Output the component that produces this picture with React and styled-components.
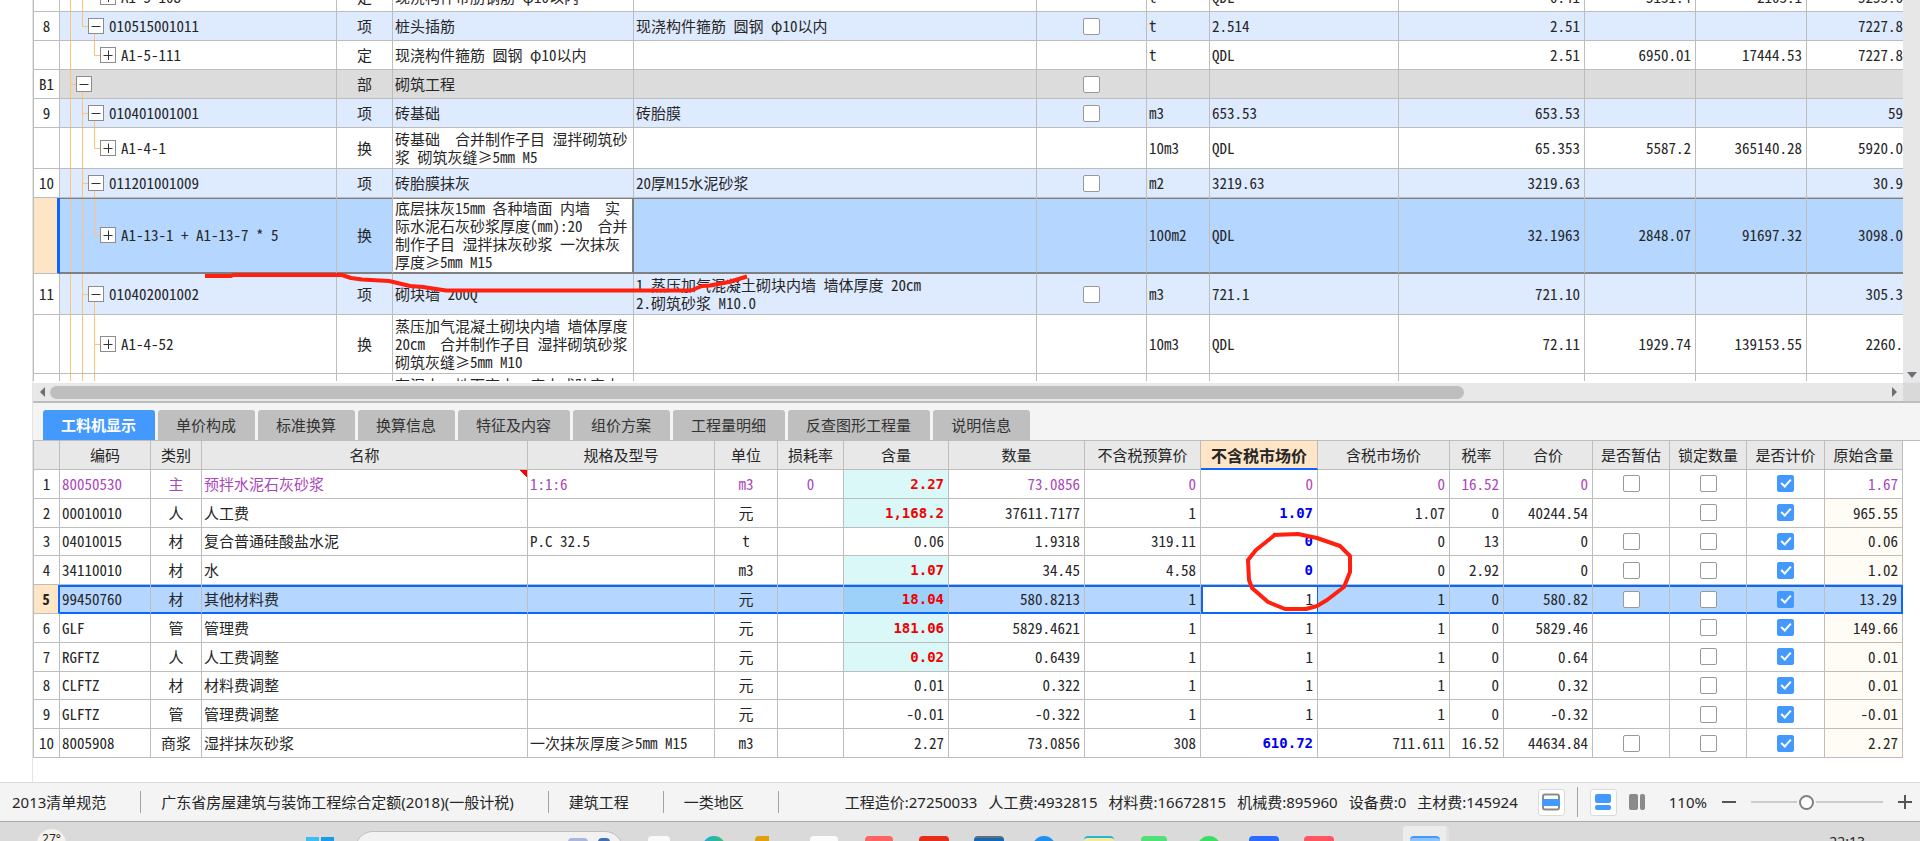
import React from "react";
import styled, { createGlobalStyle, css } from "styled-components";

const GlobalStyle = createGlobalStyle`
  *, *::before, *::after { box-sizing: border-box; }
  body {
    margin: 0;
    background: #fff;
    color: #262626;
    font: 15px/18px "Noto Sans", "Noto Sans CJK SC", sans-serif;
  }
  button { font: inherit; color: inherit; padding: 0; border: 0; background: none; }
`;

const LINE = "#bdbdbd";
const BLUE = "#4499ff";
const FOCUS = "#0a66ff";
const GUIDE = "#ffc27a";

/* ---------- page frame ---------- */

const Page = styled.div`
  position: relative;
  display: flex;
  flex-direction: column;
  height: 100vh;
  min-height: 720px;
  overflow: hidden;
`;

const Workspace = styled.main`
  flex: 1;
  min-height: 0;
  display: flex;
  flex-direction: column;
  margin-left: 32px;
  border-left: 1px solid #e4e4e4;
`;

const UpperPane = styled.section`
  flex: 1;
  min-height: 0;
  display: flex;
`;

const UpperViewport = styled.div`
  flex: 1;
  min-width: 0;
  overflow: hidden;
  margin-bottom: 2px;
`;

const VerticalScroll = styled.div`
  width: 17px;
  display: flex;
  flex-direction: column;
  justify-content: flex-end;
  align-items: center;
  padding-bottom: 2px;
  background: #e7e7e7;
`;

const HorizontalScroll = styled.div`
  display: flex;
  align-items: center;
  height: 18px;
  background: #e8e8e8;
`;

const ScrollTrack = styled.div`
  flex: 1;
  display: flex;
`;

const ScrollThumb = styled.div`
  width: 77%;
  height: 13px;
  border-radius: 7px;
  background: #bebebe;
`;

const ScrollArrow = styled.button`
  display: flex;
  align-items: center;
  justify-content: center;
  width: 17px;
  height: 12px;
`;

const ScrollCorner = styled.div`
  width: 17px;
  height: 18px;
  background: #d9d9d9;
`;

/* ---------- grids ---------- */

const Grid = styled.table`
  width: 100%;
  table-layout: fixed;
  border-collapse: separate;
  border-spacing: 0;
  border-left: 1px solid ${LINE};
  font-family: "Noto Sans Mono CJK SC", "Noto Sans CJK SC", monospace;
`;

const BillGrid = styled(Grid)`
  margin-top: -17px;
`;

const ResourceGrid = styled(Grid)`
  height: 317px;
`;

const Cell = styled.td`
  height: ${(p) => p.$h || 28}px;
  padding: 0 ${(p) => (p.$align === "right" ? 4 : 2)}px;
  overflow: hidden;
  white-space: pre;
  vertical-align: middle;
  text-align: ${(p) => p.$align || "left"};
  border-right: 1px solid ${LINE};
  border-bottom: 1px solid ${LINE};
`;

const HeadCell = styled.th`
  height: 29px;
  padding: 0;
  font-weight: 400;
  white-space: nowrap;
  background: #e8e8e8;
  border-right: 1px solid ${LINE};
  border-bottom: 1px solid ${LINE};
  ${(p) =>
    p.$active &&
    css`
      font-size: 16px;
      font-weight: 700;
      background: #fee5c6;
      border-bottom: 2px solid ${FOCUS};
    `}
`;

const NumberCell = styled(Cell).attrs({ as: "th", scope: "row" })`
  padding: 0;
  color: #262626;
  text-align: center;
  font-weight: ${(p) => (p.$current ? 700 : 400)};
  background: ${(p) => (p.$current ? "#fee5c6" : "#fff")};
`;

const rowTone = { item: "#deeafe", part: "#dcdcdc", plain: "#fff", picked: "#b4d6ff" };

const BillRow = styled.tr`
  background: ${(p) => rowTone[p.$tone]};
  ${(p) =>
    p.$tone === "picked" &&
    css`
      ${Cell}:not(${NumberCell}) {
        border-bottom: 2px solid #808080;
        box-shadow: inset 0 1px #808080;
      }
      && ${NumberCell} { border-right: 3px solid ${FOCUS}; }
    `}
`;

const BillLastCell = styled(Cell)`
  padding-right: 0;
  border-right: 0;
`;

const NameCell = styled(Cell)`
  ${(p) =>
    p.$focus &&
    css`
      background: #fff;
      border-right: 2px solid #808080;
    `}
`;

const guide = (x, part) =>
  part === "stub"
    ? `linear-gradient(${GUIDE}, ${GUIDE}) ${x}px 50% / 6px 1px no-repeat`
    : `linear-gradient(${GUIDE}, ${GUIDE}) ${x}px ${part === "bottom" ? "100%" : "0"} / 1px ${part === "full" ? "100%" : "50%"} no-repeat`;

const TreeCell = styled(Cell)`
  padding-left: ${(p) => 16 + p.$level * 12}px;
  background: ${(p) => p.$guides.map(([x, part]) => guide(x, part)).join(", ")};
`;

const TreeLabel = styled.div`
  display: flex;
  align-items: center;
  gap: 5px;
`;

const ToggleButton = styled.button`
  display: flex;
  flex: none;
  width: 16px;
  height: 16px;
  border: 1px solid #8c8c8c;
  background: #fff;
`;

const CheckBox = styled.input.attrs({ type: "checkbox" })`
  appearance: none;
  display: block;
  position: relative;
  width: 17px;
  height: 17px;
  margin: 0 auto;
  border: 1px solid #999;
  border-radius: 2px;
  background: #fff;
  &:checked {
    border-color: ${BLUE};
    background: ${BLUE};
  }
  &:checked::after {
    content: "";
    position: absolute;
    left: 5px;
    top: 1px;
    width: 6px;
    height: 10px;
    border: solid #fff;
    border-width: 0 2px 2px 0;
    transform: rotate(42deg);
  }
`;

const ResourceRow = styled.tr`
  color: ${(p) => (p.$main ? "#ab47bc" : "inherit")};
  ${(p) =>
    p.$picked &&
    css`
      ${Cell}:not(${NumberCell}) {
        background: #b4d6ff;
        border-bottom-color: ${FOCUS};
        box-shadow: inset 0 2px ${FOCUS}, inset 0 -1px ${FOCUS};
      }
      ${Cell}:last-child { border-right: 2px solid ${FOCUS}; }
      && ${NumberCell} { border-right: 2px solid ${FOCUS}; }
    `}
`;

const FlagCell = styled(Cell)`
  background: linear-gradient(to bottom left, #f00 50%, transparent 50%) 100% 0 / 8px 8px no-repeat;
`;

const AmountCell = styled(Cell)`
  ${(p) =>
    p.$changed &&
    css`
      &&&& { background: ${p.$picked ? "#9dd1fa" : "#d9f8f7"}; }
      color: #f00000;
      font: 700 14px/18px "DejaVu Sans Mono", monospace;
    `}
`;

const PriceCell = styled(Cell)`
  ${(p) =>
    p.$changed &&
    css`
      color: #0000f0;
      font: 700 14px/18px "DejaVu Sans Mono", monospace;
    `}
  ${(p) =>
    p.$focus &&
    css`
      &&&& {
        background: #fff;
        border-right-color: ${FOCUS};
        box-shadow: inset 2px 2px ${FOCUS}, inset 0 -1px ${FOCUS};
      }
    `}
`;

const OriginCell = styled(Cell)`
  background: ${(p) => (p.$plain ? "#fff" : "#fffbf5")};
`;

/* ---------- lower pane ---------- */

const LowerPane = styled.section`
  border-top: 2px solid ${LINE};
`;

const TabStrip = styled.div`
  display: flex;
  align-items: flex-end;
  gap: 3px;
  height: 38px;
  padding-left: 10px;
  background: #f4f4f4;
  border-bottom: 1px solid ${LINE};
`;

const Tab = styled.button`
  height: 30px;
  padding: 0 19px 0 18px;
  border-radius: 3px 3px 0 0;
  white-space: nowrap;
  color: ${(p) => (p.$active ? "#fff" : "#333")};
  font-weight: ${(p) => (p.$active ? 700 : 400)};
  background: ${(p) => (p.$active ? BLUE : "#bfbfbf")};
`;

const ResourceViewport = styled.div`
  padding: 0 17px 24px 0;
`;

/* ---------- status bar ---------- */

const StatusBar = styled.footer`
  display: flex;
  align-items: center;
  height: 40px;
  padding: 0 7px 0 12px;
  background: #f4f4f4;
  border-top: 1px solid #dcdcdc;
  border-bottom: 1px solid #a9a9a9;
  white-space: nowrap;
`;

const StatusItem = styled.span`
  margin-right: 34px;
`;

const Divider = styled.span`
  width: 1px;
  height: ${(p) => (p.$tall ? 30 : 22)}px;
  margin-right: ${(p) => (p.$tall ? 0 : 20)}px;
  background: #9aa5b0;
`;

const Totals = styled.div`
  display: flex;
  gap: 11px;
  margin-left: auto;
  margin-right: 20px;
`;

const ViewTools = styled.div`
  display: flex;
  align-items: center;
  gap: 12px;
`;

const ViewButton = styled.button`
  display: flex;
  align-items: center;
  justify-content: center;
  width: ${(p) => (p.$framed ? 27 : 16)}px;
  height: 27px;
  border-radius: 3px;
  border: ${(p) => (p.$framed ? "1px solid #dadada" : "0")};
  background: ${(p) => (p.$framed ? "#fff" : "none")};
`;

const Zoom = styled.div`
  display: flex;
  align-items: center;
  gap: 14px;
  margin-left: 12px;
`;

const ZoomButton = styled.button`
  display: flex;
  width: 16px;
  height: 16px;
`;

const ZoomSlider = styled.input.attrs({ type: "range" })`
  appearance: none;
  width: 132px;
  height: 16px;
  margin: 0;
  background: linear-gradient(#cbcbcb, #cbcbcb) 0 50% / 100% 2px no-repeat;
  &::-webkit-slider-thumb {
    appearance: none;
    width: 15px;
    height: 15px;
    border: 2px solid #808080;
    border-radius: 50%;
    background: #fff;
    box-shadow: 0 0 0 2px #f4f4f4;
  }
`;

/* ---------- desktop taskbar ---------- */

const Taskbar = styled.nav`
  display: flex;
  align-items: flex-start;
  height: 19px;
  overflow: hidden;
  padding: 0 55px 0 37px;
  background: #dadada;
`;

const Weather = styled.span`
  width: 29px;
  height: 29px;
  margin: 7px 240px 0 0;
  border-radius: 50%;
  text-align: center;
  font-size: 12px;
  line-height: 20px;
  background: #f5f2ec;
`;

const StartButton = styled.button`
  width: 28px;
  height: 28px;
  margin-top: 15px;
  background: linear-gradient(90deg, #3fbcf5 13px, #dadada 13px, #dadada 15px, #1c9ce8 15px);
`;

const SearchBox = styled.div`
  display: flex;
  justify-content: flex-end;
  gap: 10px;
  width: 268px;
  height: 36px;
  margin: 9px 8px 0 21px;
  padding: 6px 12px;
  border: 1px solid #bdbdbd;
  border-radius: 18px;
  background: #f2f2f2;
`;

const SearchArt = styled.span`
  width: ${(p) => p.$w}px;
  height: 20px;
  border-radius: 4px;
  background: ${(p) => p.$c};
`;

const TaskSlot = styled.button`
  display: flex;
  justify-content: center;
  width: 55px;
  height: 36px;
  padding-top: 14px;
`;

const TaskIcon = styled.span`
  width: ${(p) => p.$w}px;
  height: 30px;
  border-radius: ${(p) => (p.$round ? "50%" : "4px")};
  border-top: ${(p) => (p.$rim ? `2px solid ${p.$rim}` : "0")};
  background: ${(p) => p.$c};
`;

const ActiveTask = styled(TaskSlot)`
  width: 46px;
  padding-top: 10px;
  margin: 4px 0 0 57px;
  border-radius: 4px 4px 0 0;
  background: #ececec;
  border-right: 3px solid #e2e2e2;
`;

const Clock = styled.time`
  margin: 11px 0 0 auto;
  font-size: 14px;
`;

/* ---------- pen marks over the page ---------- */

const PenMarks = styled.svg`
  position: absolute;
  left: 0;
  top: 0;
  pointer-events: none;
`;

/* ---------- data ---------- */

const A = 10, B = 22, C = 34;

const billRows = [
  { no: "", level: 2, open: false, code: "A1-5-108", kind: "定", name: "现浇构件带肋钢筋 φ10以内", unit: "t", expr: "QDL", qty: "0.41", price: "5131.4", total: "2103.1", last: "5253.6", g: [[A, "full"], [B, "full"]] },
  { no: "8", level: 1, open: true, tone: "item", code: "010515001011", kind: "项", name: "桩头插筋", spec: "现浇构件箍筋 圆钢 φ10以内", box: true, unit: "t", expr: "2.514", qty: "2.51", last: "7227.8", g: [[A, "full"], [B, "top"], [B, "stub"], [C, "bottom"]] },
  { no: "", level: 2, open: false, code: "A1-5-111", kind: "定", name: "现浇构件箍筋 圆钢 φ10以内", unit: "t", expr: "QDL", qty: "2.51", price: "6950.01", total: "17444.53", last: "7227.8", g: [[A, "full"], [C, "top"], [C, "stub"]] },
  { no: "B1", level: 0, open: true, tone: "part", code: "", kind: "部", name: "砌筑工程", box: true, g: [[A, "full"], [A, "stub"], [B, "bottom"]] },
  { no: "9", level: 1, open: true, tone: "item", code: "010401001001", kind: "项", name: "砖基础", spec: "砖胎膜", box: true, unit: "m3", expr: "653.53", qty: "653.53", last: "59", g: [[A, "full"], [B, "full"], [B, "stub"], [C, "bottom"]] },
  { no: "", h: 41, level: 2, open: false, code: "A1-4-1", kind: "换", name: "砖基础  合并制作子目 湿拌砌筑砂\n浆 砌筑灰缝≥5mm M5", unit: "10m3", expr: "QDL", qty: "65.353", price: "5587.2", total: "365140.28", last: "5920.0", g: [[A, "full"], [B, "full"], [C, "top"], [C, "stub"]] },
  { no: "10", level: 1, open: true, tone: "item", code: "011201001009", kind: "项", name: "砖胎膜抹灰", spec: "20厚M15水泥砂浆", box: true, unit: "m2", expr: "3219.63", qty: "3219.63", last: "30.9", g: [[A, "full"], [B, "full"], [B, "stub"], [C, "bottom"]] },
  { no: "", h: 76, level: 2, open: false, tone: "picked", code: "A1-13-1 + A1-13-7 * 5", kind: "换", name: "底层抹灰15mm 各种墙面 内墙  实\n际水泥石灰砂浆厚度(mm):20  合并\n制作子目 湿拌抹灰砂浆 一次抹灰\n厚度≥5mm M15", unit: "100m2", expr: "QDL", qty: "32.1963", price: "2848.07", total: "91697.32", last: "3098.0", g: [[A, "full"], [B, "full"], [C, "top"], [C, "stub"]] },
  { no: "11", h: 41, level: 1, open: true, tone: "item", code: "010402001002", kind: "项", name: "砌块墙 200Q", spec: "1.蒸压加气混凝土砌块内墙 墙体厚度 20cm\n2.砌筑砂浆 M10.0", box: true, unit: "m3", expr: "721.1", qty: "721.10", last: "305.3", g: [[A, "full"], [B, "full"], [B, "stub"], [C, "bottom"]] },
  { no: "", h: 59, level: 2, open: false, code: "A1-4-52", kind: "换", name: "蒸压加气混凝土砌块内墙 墙体厚度\n20cm  合并制作子目 湿拌砌筑砂浆\n砌筑灰缝≥5mm M10", unit: "10m3", expr: "QDL", qty: "72.11", price: "1929.74", total: "139153.55", last: "2260.", g: [[A, "full"], [B, "full"], [C, "full"], [C, "stub"]] },
  { no: "", h: 41, level: 2, code: "", kind: "", name: "有泥夹  地下室夹  底夹或防实夹\n浆", g: [[A, "full"], [B, "full"], [C, "full"]] },
];

const billWidths = [26, 277, 56, 241, null, 110, 63, 189, 186, 111, 111, 96];

const tabs = ["工料机显示", "单价构成", "标准换算", "换算信息", "特征及内容", "组价方案", "工程量明细", "反查图形工程量", "说明信息"];

const heads = ["", "编码", "类别", "名称", "规格及型号", "单位", "损耗率", "含量", "数量", "不含税预算价", "不含税市场价", "含税市场价", "税率", "合价", "是否暂估", "锁定数量", "是否计价", "原始含量"];
const resourceWidths = [26, 91, 51, null, 187, 63, 66, 105, 136, 116, 117, 132, 54, 89, 77, 77, 78, 78];

// code, kind, name, spec, unit, loss, amount, amountChanged, qty, budget, market, marketChanged, taxed, rate, sum, canEstimate, origin
const resources = [
  ["80050530", "主", "预拌水泥石灰砂浆", "1:1:6", "m3", "0", "2.27", true, "73.0856", "0", "0", false, "0", "16.52", "0", true, "1.67"],
  ["00010010", "人", "人工费", "", "元", "", "1,168.2", true, "37611.7177", "1", "1.07", true, "1.07", "0", "40244.54", false, "965.55"],
  ["04010015", "材", "复合普通硅酸盐水泥", "P.C 32.5", "t", "", "0.06", false, "1.9318", "319.11", "0", true, "0", "13", "0", true, "0.06"],
  ["34110010", "材", "水", "", "m3", "", "1.07", true, "34.45", "4.58", "0", true, "0", "2.92", "0", true, "1.02"],
  ["99450760", "材", "其他材料费", "", "元", "", "18.04", true, "580.8213", "1", "1", false, "1", "0", "580.82", true, "13.29"],
  ["GLF", "管", "管理费", "", "元", "", "181.06", true, "5829.4621", "1", "1", false, "1", "0", "5829.46", false, "149.66"],
  ["RGFTZ", "人", "人工费调整", "", "元", "", "0.02", true, "0.6439", "1", "1", false, "1", "0", "0.64", false, "0.01"],
  ["CLFTZ", "材", "材料费调整", "", "元", "", "0.01", false, "0.322", "1", "1", false, "1", "0", "0.32", false, "0.01"],
  ["GLFTZ", "管", "管理费调整", "", "元", "", "-0.01", false, "-0.322", "1", "1", false, "1", "0", "-0.32", false, "-0.01"],
  ["8005908", "商浆", "湿拌抹灰砂浆", "一次抹灰厚度≥5mm M15", "m3", "", "2.27", false, "73.0856", "308", "610.72", true, "711.611", "16.52", "44634.84", true, "2.27"],
];

const taskIcons = [
  { name: "任务视图", w: 22, c: "#fafafa" },
  { name: "浏览器", w: 26, c: "linear-gradient(90deg, #1fa7e0, #36c46c)", round: true },
  { name: "文件", w: 28, c: "linear-gradient(90deg, #e0a20c 14px, transparent 14px)" },
  { name: "商店", w: 28, c: "#fbfbfb" },
  { name: "音乐", w: 28, c: "#ff6464" },
  { name: "阅读", w: 30, c: "#e62d1c" },
  { name: "电脑", w: 30, c: "#1566b5", rim: "#5f6f80" },
  { name: "通讯", w: 26, c: "#1e90f0", round: true },
  { name: "图片", w: 30, c: "#f4e9a0", rim: "#22b8cf" },
  { name: "笔记", w: 26, c: "#4fe07a" },
  { name: "微信", w: 26, c: "#3fdc62", round: true },
  { name: "会议", w: 30, c: "#2a6cff" },
  { name: "视频", w: 30, c: "#ff5563" },
];

/* ---------- pieces ---------- */

const Cols = ({ widths }) => (
  <colgroup>
    {widths.map((w, i) => (
      <col key={i} width={w || undefined} />
    ))}
  </colgroup>
);

const Toggle = ({ open }) => (
  <ToggleButton aria-label={open ? "折叠" : "展开"}>
    <svg width="14" height="14" viewBox="0 0 14 14" stroke="#333" fill="none">
      <path d={open ? "M2.5 7.5H11.5" : "M2.5 7.5H11.5M7.5 2.5V12"} />
    </svg>
  </ToggleButton>
);

const Arrow = ({ d, label }) => (
  <ScrollArrow aria-label={label}>
    <svg width="12" height="12" viewBox="0 0 12 12" fill="#6e6e78">
      <path d={d} />
    </svg>
  </ScrollArrow>
);

function Bill() {
  return (
    <BillGrid>
      <Cols widths={billWidths} />
      <tbody>
        {billRows.map((r, i) => {
          const picked = r.tone === "picked";
          return (
            <BillRow key={i} $tone={r.tone || "plain"}>
              <NumberCell $h={r.h || 29} $current={picked}>{r.no}</NumberCell>
              <TreeCell $level={r.level} $guides={r.g}>
                <TreeLabel>
                  {r.open !== undefined && <Toggle open={r.open} />}
                  {r.code}
                </TreeLabel>
              </TreeCell>
              <Cell $align="center">{r.kind}</Cell>
              <NameCell $focus={picked}>{r.name}</NameCell>
              <Cell>{r.spec}</Cell>
              <Cell $align="center">{r.box && <CheckBox aria-label={"锁定 " + r.name} />}</Cell>
              <Cell>{r.unit}</Cell>
              <Cell>{r.expr}</Cell>
              <Cell $align="right">{r.qty}</Cell>
              <Cell $align="right">{r.price}</Cell>
              <Cell $align="right">{r.total}</Cell>
              <BillLastCell $align="right">{r.last}</BillLastCell>
            </BillRow>
          );
        })}
      </tbody>
    </BillGrid>
  );
}

function Resources() {
  return (
    <ResourceGrid>
      <Cols widths={resourceWidths} />
      <thead>
        <tr>
          {heads.map((h, i) => (
            <HeadCell key={i} scope="col" $active={i === 10}>{h}</HeadCell>
          ))}
        </tr>
      </thead>
      <tbody>
        {resources.map((r, i) => {
          const picked = i === 4;
          const Name = i === 0 ? FlagCell : Cell;
          return (
            <ResourceRow key={r[0]} $main={i === 0} $picked={picked}>
              <NumberCell $current={picked}>{i + 1}</NumberCell>
              <Cell>{r[0]}</Cell>
              <Cell $align="center">{r[1]}</Cell>
              <Name>{r[2]}</Name>
              <Cell>{r[3]}</Cell>
              <Cell $align="center">{r[4]}</Cell>
              <Cell $align="center">{r[5]}</Cell>
              <AmountCell $align="right" $changed={r[7]} $picked={picked}>{r[6]}</AmountCell>
              <Cell $align="right">{r[8]}</Cell>
              <Cell $align="right">{r[9]}</Cell>
              <PriceCell $align="right" $changed={r[11]} $focus={picked}>{r[10]}</PriceCell>
              <Cell $align="right">{r[12]}</Cell>
              <Cell $align="right">{r[13]}</Cell>
              <Cell $align="right">{r[14]}</Cell>
              <Cell>{r[15] && <CheckBox aria-label={"是否暂估 " + r[2]} />}</Cell>
              <Cell><CheckBox aria-label={"锁定数量 " + r[2]} /></Cell>
              <Cell><CheckBox defaultChecked aria-label={"是否计价 " + r[2]} /></Cell>
              <OriginCell $align="right" $plain={i === 0}>{r[16]}</OriginCell>
            </ResourceRow>
          );
        })}
      </tbody>
    </ResourceGrid>
  );
}

const scopes = ["2013清单规范", "广东省房屋建筑与装饰工程综合定额(2018)(一般计税)", "建筑工程", "一类地区"];
const totals = ["工程造价:27250033", "人工费:4932815", "材料费:16672815", "机械费:895960", "设备费:0", "主材费:145924"];

export default function App() {
  return (
    <Page>
      <GlobalStyle />
      <Workspace>
        <UpperPane>
          <UpperViewport>
            <Bill />
          </UpperViewport>
          <VerticalScroll>
            <Arrow label="向下滚动" d="M1 3H11L6 9Z" />
          </VerticalScroll>
        </UpperPane>
        <HorizontalScroll>
          <Arrow label="向左滚动" d="M9 1V11L4 6Z" />
          <ScrollTrack>
            <ScrollThumb />
          </ScrollTrack>
          <Arrow label="向右滚动" d="M3 1V11L8 6Z" />
          <ScrollCorner />
        </HorizontalScroll>
        <LowerPane>
          <TabStrip role="tablist">
            {tabs.map((t, i) => (
              <Tab key={t} role="tab" aria-selected={i === 0} $active={i === 0}>{t}</Tab>
            ))}
          </TabStrip>
          <ResourceViewport>
            <Resources />
          </ResourceViewport>
        </LowerPane>
      </Workspace>

      <StatusBar>
        {scopes.map((s) => (
          <React.Fragment key={s}>
            <StatusItem>{s}</StatusItem>
            <Divider />
          </React.Fragment>
        ))}
        <Totals>
          {totals.map((t) => (
            <span key={t}>{t}</span>
          ))}
        </Totals>
        <ViewTools>
          <ViewButton $framed aria-label="单栏视图">
            <svg width="18" height="18" viewBox="0 0 18 18">
              <rect x="1" y="1.5" width="16" height="15" rx="2" fill="#fff" stroke="#8c8c8c" strokeWidth="2" />
              <rect x="0" y="6" width="18" height="7" fill={BLUE} />
            </svg>
          </ViewButton>
          <Divider $tall />
          <ViewButton $framed aria-label="上下视图">
            <svg width="16" height="16" viewBox="0 0 16 16" fill={BLUE}>
              <rect width="16" height="9" rx="2" />
              <rect y="11" width="16" height="5" rx="2" />
            </svg>
          </ViewButton>
          <ViewButton aria-label="左右视图">
            <svg width="16" height="16" viewBox="0 0 16 16" fill="#8a8a8a">
              <rect width="9" height="16" rx="2" />
              <rect x="11" width="5" height="16" rx="2" />
            </svg>
          </ViewButton>
          <Zoom>
            <span>110%</span>
            <ZoomButton aria-label="缩小">
              <svg width="16" height="16" viewBox="0 0 16 16" stroke="#555" strokeWidth="2"><path d="M1 8H15" /></svg>
            </ZoomButton>
            <ZoomSlider aria-label="缩放" min="0" max="100" defaultValue="41" />
            <ZoomButton aria-label="放大">
              <svg width="16" height="16" viewBox="0 0 16 16" stroke="#555" strokeWidth="2"><path d="M1 8H15M8 1V15" /></svg>
            </ZoomButton>
          </Zoom>
        </ViewTools>
      </StatusBar>

      <Taskbar>
        <Weather>27°</Weather>
        <StartButton aria-label="开始" />
        <SearchBox>
          <SearchArt $w={20} $c="#a9b7dc" />
          <SearchArt $w={12} $c="#3f6fb5" />
        </SearchBox>
        {taskIcons.map((t) => (
          <TaskSlot key={t.name} aria-label={t.name}>
            <TaskIcon $w={t.w} $c={t.c} $round={t.round} $rim={t.rim} />
          </TaskSlot>
        ))}
        <ActiveTask aria-label="计价软件">
          <TaskIcon $w={30} $c="#8cc4ff" $rim={BLUE} />
        </ActiveTask>
        <Clock>22:13</Clock>
      </Taskbar>

      <PenMarks width="1400" height="640" viewBox="0 0 1400 640" fill="none" stroke="#ff2010" strokeWidth="4" strokeLinejoin="round">
        <path d="M205 276H231L233 275H342L351 278L362 279.500L389 281L410 286L423 287L446 290.500H691L702 286L710 285.500L729 282L747 276.500" />
        <path d="M1273 535L1298 534L1317 538L1340 546L1350 556V572L1344 587L1327 600L1317 606L1306 609H1285L1268 602L1252 588L1249 580L1248 560L1256 550L1276 534" />
      </PenMarks>
    </Page>
  );
}
